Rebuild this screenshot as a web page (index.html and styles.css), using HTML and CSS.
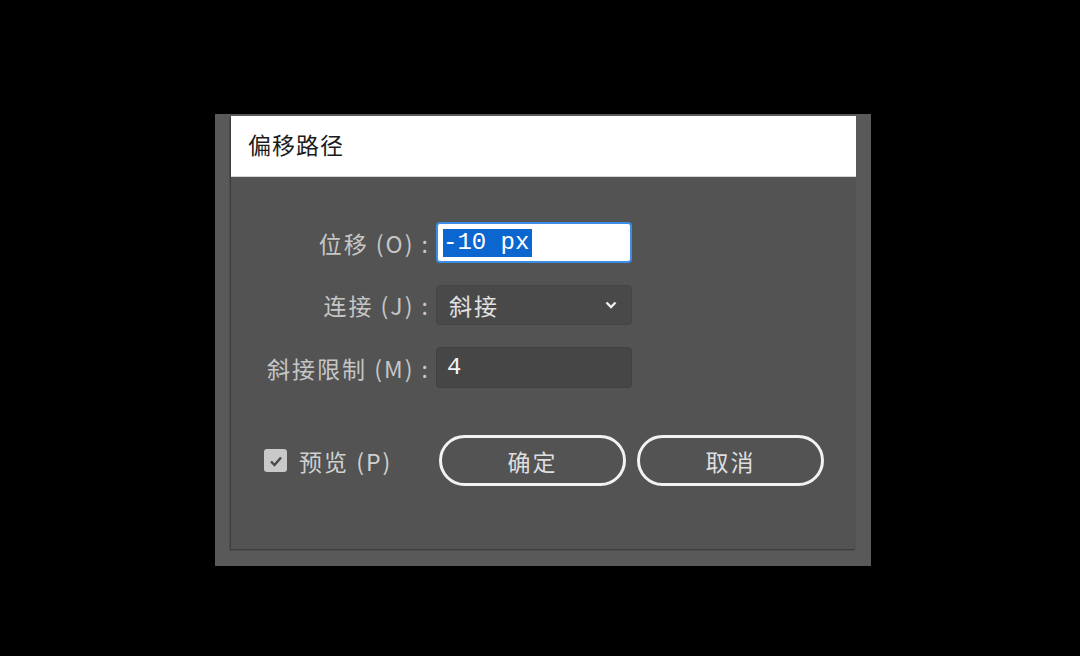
FILE: index.html
```html
<!DOCTYPE html>
<html lang="zh-CN">
<head>
  <meta charset="UTF-8">
  <title>偏移路径</title>
  <link rel="stylesheet" href="styles.css">
</head>
<body>
  <div class="stage">
    <div class="dialog-frame">
      <div class="dialog">
        <div class="title-bar">偏移路径</div>
        <div class="dialog-body">
          <div class="form">
            <label class="field-label">位移 (O) :</label>
            <div class="text-input active"><span class="selection">-10 px</span></div>

            <label class="field-label">连接 (J) :</label>
            <div class="select">
              <span>斜接</span>
              <svg class="chevron" width="12" height="8" viewBox="0 0 12 8">
                <path d="M1.5 1.5 L6 6 L10.5 1.5" fill="none" stroke="#eeeeee" stroke-width="2.4"/>
              </svg>
            </div>

            <label class="field-label">斜接限制 (M) :</label>
            <div class="text-input dim">4</div>
          </div>

          <div class="footer">
            <label class="preview">
              <span class="checkbox">
                <svg width="14" height="12" viewBox="0 0 14 12">
                  <path d="M2 6.5 L5.5 10 L12 2.5" fill="none" stroke="#4a4a4a" stroke-width="2.4"/>
                </svg>
              </span>
              预览 (P)
            </label>
            <div class="buttons">
              <button class="btn">确定</button>
              <button class="btn">取消</button>
            </div>
          </div>
        </div>
      </div>
    </div>
  </div>
</body>
</html>
```

FILE: styles.css
```css
/* styles.css */
body {
  margin: 0;
  background: #000;
  font-family: "Noto Sans CJK SC", "Noto Sans", sans-serif;
}

.stage {
  padding: 114px 0 0 215px;
  height: 656px;
  box-sizing: border-box;
}

.dialog-frame {
  width: 656px;
  height: 452px;
  background: #595959;
  padding: 2px 0 0 16px;
  box-sizing: border-box;
}

.dialog {
  width: 625px;
  height: 433px;
  background: #535353;
  box-shadow: -1px 1px 0 #3e3e3e, -2px 2px 0 #4c4c4c;
  display: flex;
  flex-direction: column;
}

.title-bar {
  height: 61px;
  background: #fff;
  border-bottom: 1px solid #d6d6d6;
  box-sizing: border-box;
  padding: 0 0 4px 17px;
  display: flex;
  align-items: center;
  font-size: 23px;
  letter-spacing: 1px;
  color: #1c1c1c;
}

.dialog-body {
  padding: 45px 32px 0 33px;
}

.form {
  display: grid;
  grid-template-columns: 166px 196px;
  column-gap: 6px;
  row-gap: 22px;
  align-items: center;
}

.field-label {
  text-align: right;
  font-size: 23px;
  letter-spacing: 2px;
  color: #c6c6c6;
  white-space: nowrap;
}

.text-input {
  height: 41px;
  box-sizing: border-box;
  border-radius: 4px;
  display: flex;
  align-items: center;
  font-family: "Liberation Mono", monospace;
  font-size: 24px;
}

.text-input.active {
  background: #fff;
  border: 2px solid #3b8de6;
  padding-left: 5px;
}

.selection {
  background: #0c66d0;
  color: #fff;
  line-height: 28px;
  padding-right: 3px;
}

.text-input.dim {
  background: #464646;
  border: 1px solid #404040;
  color: #f2f2f2;
  padding-left: 10px;
}

.select {
  height: 40px;
  box-sizing: border-box;
  background: #494949;
  border: 1px solid #444;
  border-radius: 4px;
  display: flex;
  align-items: center;
  justify-content: space-between;
  padding: 0 14px 0 12px;
  font-size: 23px;
  letter-spacing: 2px;
  color: #e2e2e2;
}

.footer {
  margin-top: 47px;
  display: flex;
  align-items: center;
  justify-content: space-between;
}

.preview {
  display: flex;
  align-items: center;
  gap: 12px;
  font-size: 23px;
  letter-spacing: 2px;
  color: #d0d0d0;
}

.checkbox {
  width: 23px;
  height: 23px;
  background: #c9c9c9;
  border-radius: 3px;
  display: flex;
  align-items: center;
  justify-content: center;
}

.buttons {
  display: flex;
  gap: 11px;
}

.btn {
  width: 187px;
  height: 51px;
  border: 3px solid #f2f2f2;
  border-radius: 26px;
  background: transparent;
  color: #dedede;
  font-family: "Noto Sans CJK SC", sans-serif;
  font-size: 23px;
  letter-spacing: 2px;
  cursor: pointer;
}
```
